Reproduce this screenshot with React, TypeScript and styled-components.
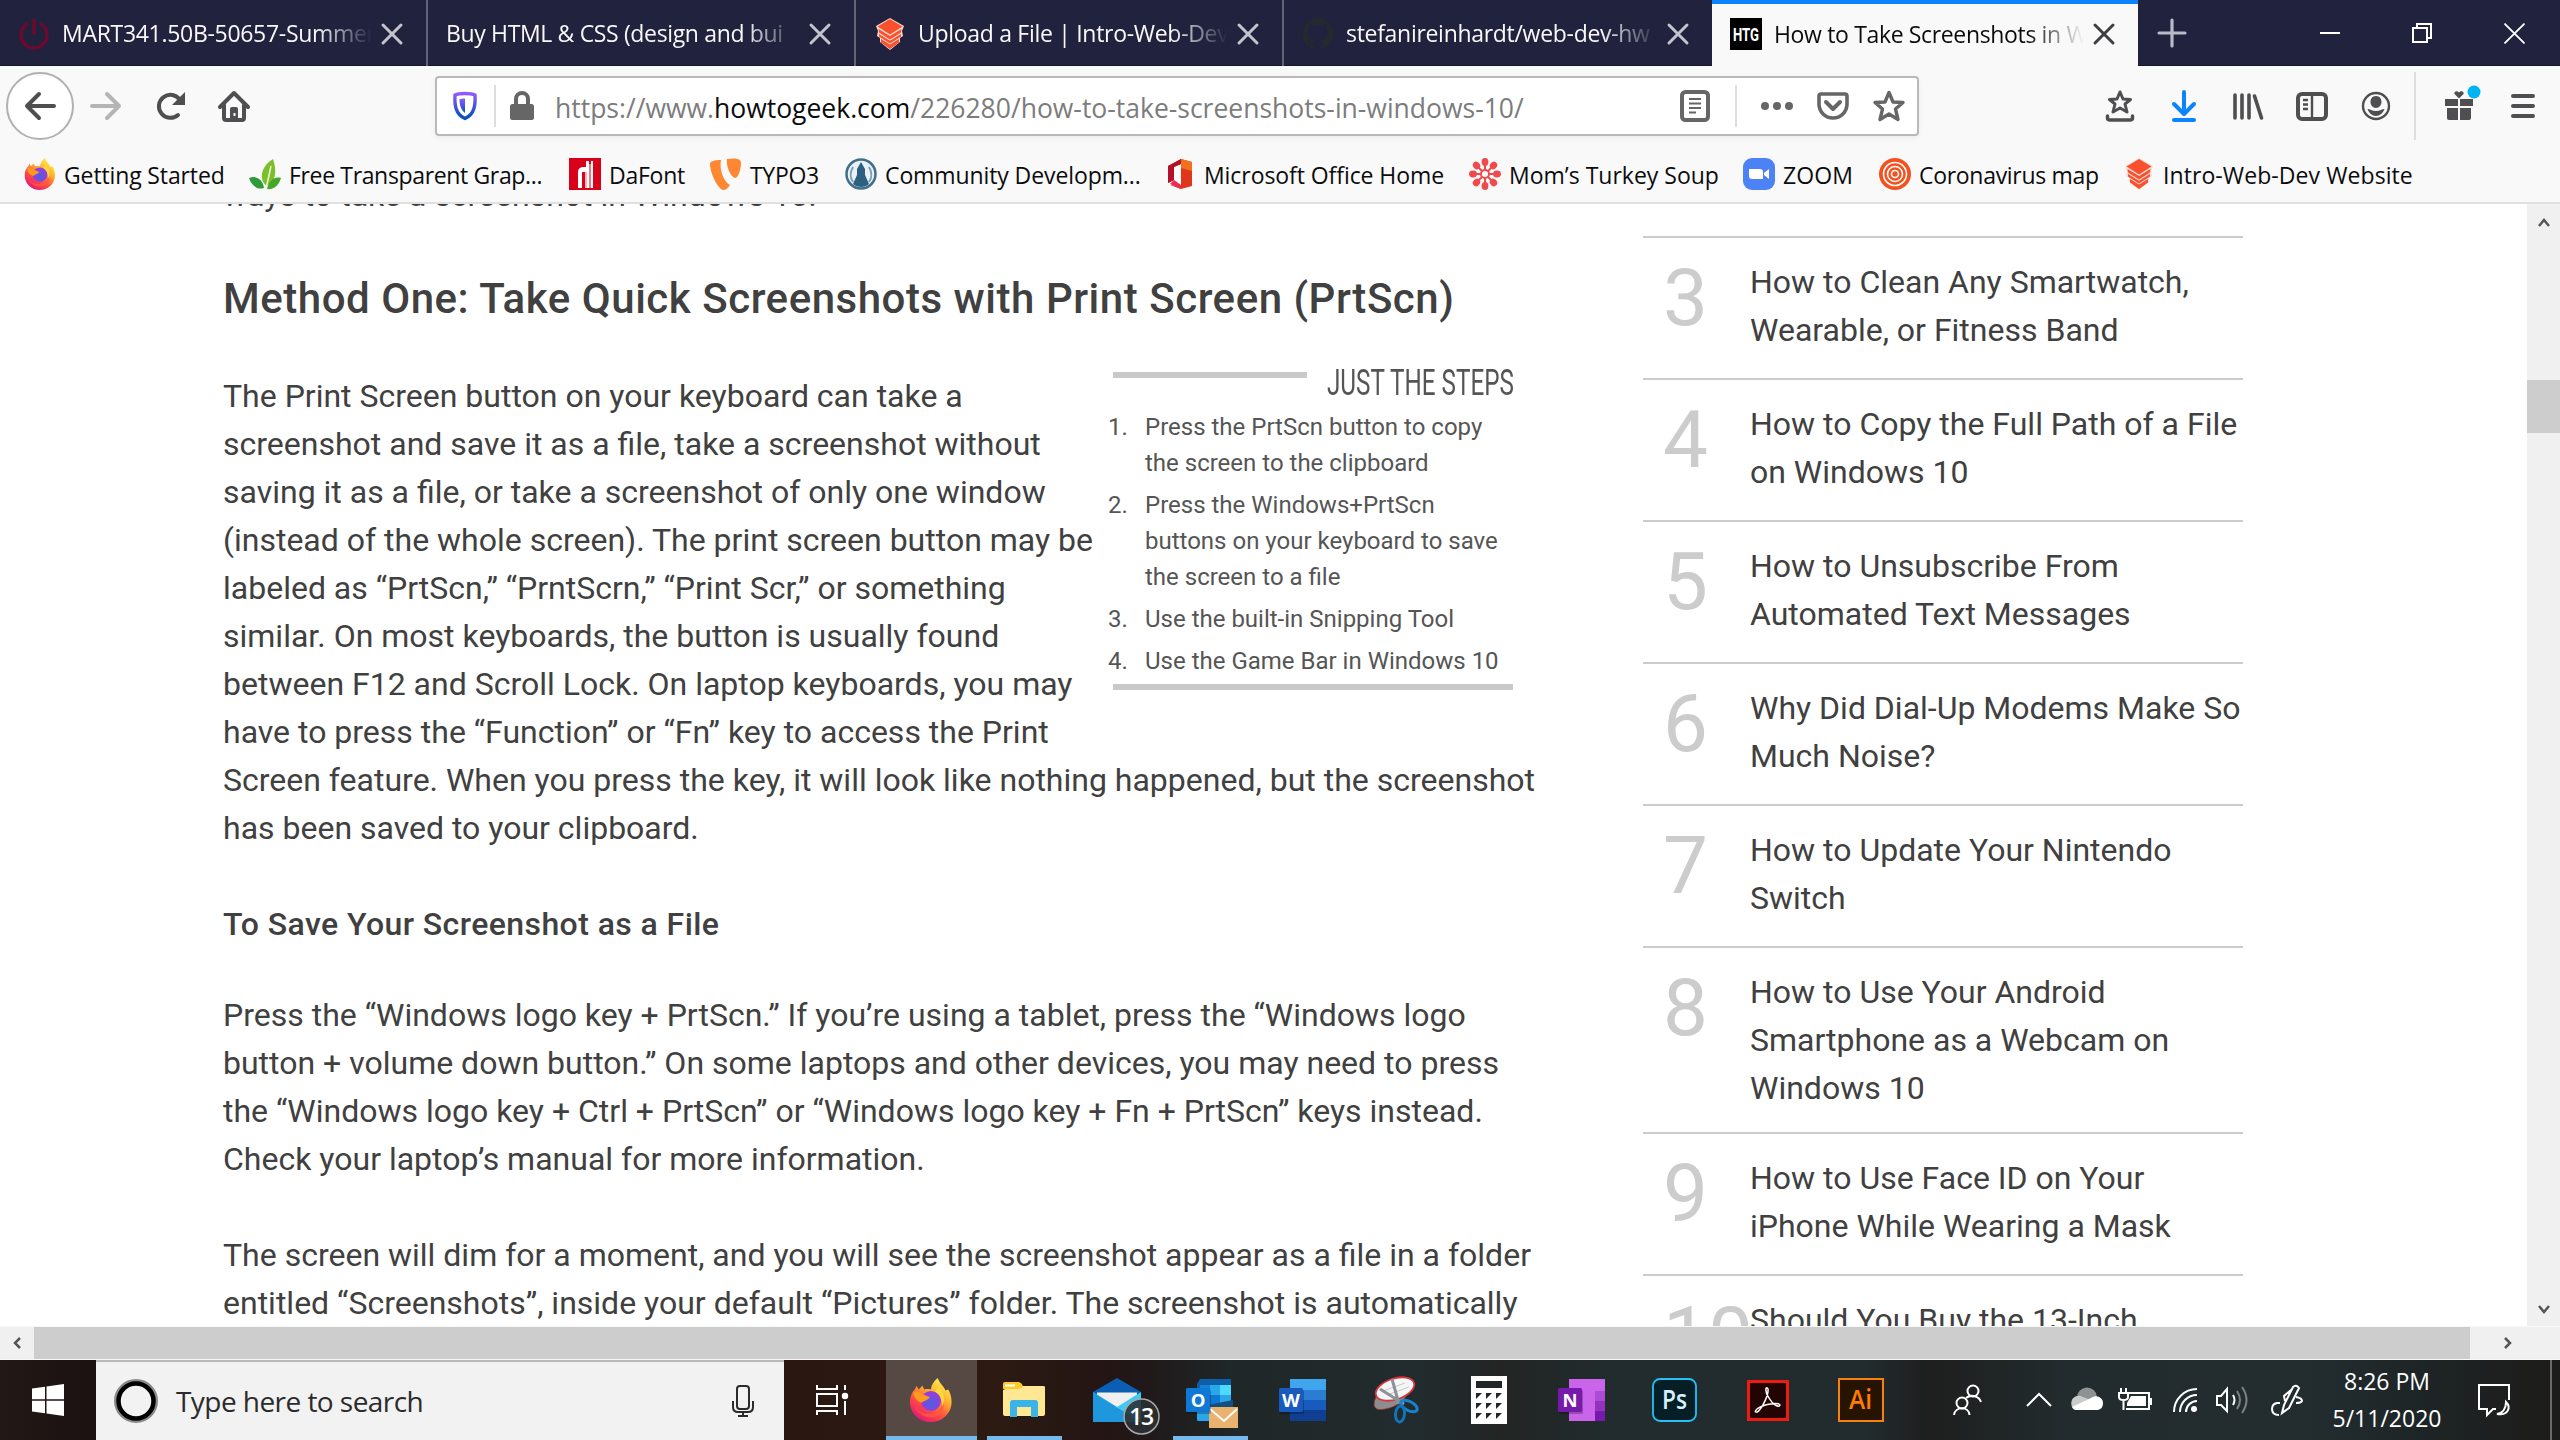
import React from "react";
import styled, { createGlobalStyle } from "styled-components";

const UI = `"Open Sans", "Noto Sans", sans-serif`;

const Global = createGlobalStyle`
  * { box-sizing: border-box; }
  body { margin: 0; background: #fff; overflow: hidden; }
  svg { display: block; flex: none; overflow: visible; }
`;

const Screen = styled.div`
  width: 2560px;
  height: 1440px;
  display: flex;
  flex-direction: column;
  overflow: hidden;
  font-family: ${UI};
  white-space: nowrap;
`;

/* ---------- tab strip ---------- */

const TabStrip = styled.div`
  height: 66px;
  display: flex;
  background: #20223e;
  box-shadow: inset 0 -1px 0 #15172b;
`;

const Tab = styled.div<{ $active?: boolean; $line?: boolean }>`
  width: ${(p) => (p.$active ? 426 : 428)}px;
  height: 66px;
  padding: 0 18px;
  display: flex;
  align-items: center;
  background: ${(p) => (p.$active ? "#f9f9fa" : "transparent")};
  color: ${(p) => (p.$active ? "#0c0c0d" : "#f9f9fa")};
  border-top: ${(p) => (p.$active ? "4px solid #0a84ff" : "0")};
  border-right: ${(p) => (p.$line ? "2px solid #63647a" : "0 solid")};
  svg { margin-top: ${(p) => (p.$active ? -2 : 2)}px; }
`;

const TabTitle = styled.div<{ $icon?: boolean; $active?: boolean; $ls: number }>`
  flex: 1;
  overflow: hidden;
  margin-left: ${(p) => (p.$icon ? 12 : 0)}px;
  margin-top: ${(p) => (p.$active ? -3 : 0)}px;
  font-size: 23px;
  line-height: 34px;
  letter-spacing: ${(p) => p.$ls}px;
  mask-image: linear-gradient(to left, transparent 0, #000 56px);
`;

const TabClose = styled.div`
  width: 32px;
  display: flex;
  justify-content: center;
  margin-left: 4px;
`;

const NewTab = styled.div`
  width: 68px;
  display: flex;
  align-items: center;
  justify-content: center;
`;

const WindowButtons = styled.div`
  margin-left: auto;
  display: flex;
  align-items: center;
`;

const WindowButton = styled.div`
  width: 92px;
  display: flex;
  justify-content: center;
`;

/* ---------- navigation ---------- */

const NavBar = styled.div`
  height: 80px;
  display: flex;
  align-items: center;
  background: #f9f9fa;
`;

const NavLeft = styled.div`
  width: 435px;
  display: flex;
  align-items: center;
  padding-left: 6px;
`;

const BackButton = styled.div`
  width: 68px;
  height: 68px;
  border-radius: 50%;
  border: 2px solid #b1b1b3;
  background: #fff;
  display: flex;
  align-items: center;
  justify-content: center;
`;

const NavButton = styled.div<{ $w?: number }>`
  width: ${(p) => p.$w ?? 64}px;
  display: flex;
  justify-content: center;
`;

const UrlBar = styled.div`
  width: 1484px;
  height: 60px;
  border: 2px solid #b9b9bb;
  border-radius: 4px;
  background: #fff;
  display: flex;
  align-items: center;
  padding-left: 12px;
  box-shadow: 0 2px 6px rgba(0, 0, 0, 0.06);
`;

const Divider = styled.div<{ $h: number }>`
  width: 2px;
  height: ${(p) => p.$h}px;
  background: #dededf;
`;

const Url = styled.div`
  flex: 1;
  margin-left: 20px;
  font-size: 26.5px;
  line-height: 40px;
  padding-top: 4px;
  color: #7c7c7d;
  b { font-weight: 400; color: #0c0c0d; }
`;

const NavRight = styled.div`
  flex: 1;
  display: flex;
  align-items: center;
  justify-content: flex-end;
  padding-right: 9px;
`;

const Bookmarks = styled.div`
  height: 58px;
  display: flex;
  padding-top: 12px;
  padding-left: 24px;
  background: #f9f9fa;
  border-bottom: 2px solid #e0e0e1;
`;

const Bookmark = styled.div<{ $w: number; $ls: number }>`
  width: ${(p) => p.$w}px;
  height: 32px;
  display: flex;
  align-items: center;
  gap: 8px;
  font-size: 23px;
  line-height: 32px;
  letter-spacing: ${(p) => p.$ls}px;
  color: #0c0c0d;
  span { padding-top: 2px; }
`;

/* ---------- page ---------- */

const Viewport = styled.div`
  height: 1122px;
  display: flex;
  overflow: hidden;
  background: #fff;
`;

const Page = styled.div`
  flex: 1;
  display: flex;
  overflow: hidden;
  font-family: Roboto, sans-serif;
  color: #404040;
  font-size: 32px;
  line-height: 48px;
`;

const Article = styled.div`
  flex: none;
  width: 1643px;
  padding-left: 223px;
  margin-top: -33px;
`;

const Paragraph = styled.div<{ $mt?: number }>`
  margin-top: ${(p) => p.$mt ?? 0}px;
`;

const H2 = styled.h2`
  margin: 48px 0 0;
  padding-bottom: 8px;
  font-size: 42px;
  line-height: 64px;
  font-weight: 500;
  letter-spacing: 0.53px;
`;

const H4 = styled.h4`
  margin: 48px 0 0;
  font-size: 32px;
  line-height: 48px;
  font-weight: 500;
  letter-spacing: 0.42px;
`;

const Steps = styled.aside`
  float: right;
  width: 400px;
  margin-right: 130px;
  height: 318px;
  border-bottom: 6px solid #c9c9c9;
  color: #555;
`;

const StepsHead = styled.div`
  display: flex;
  justify-content: space-between;
  height: 37px;
`;

const StepsRule = styled.div`
  width: 194px;
  height: 6px;
  background: #c9c9c9;
`;

const StepsTitle = styled.div`
  width: 186px;
  margin-top: -13px;
  font-size: 37px;
  line-height: 48px;
  color: #555;
  transform: scaleX(0.655);
  transform-origin: 0 0;
`;

const StepList = styled.ol`
  list-style: none;
  margin: 0 0 0 -5px;
  padding: 0;
  font-size: 24px;
  line-height: 36px;
`;

const Step = styled.li`
  display: flex;
  margin-bottom: 6px;
  span { width: 37px; }
`;

const Sidebar = styled.div`
  flex: none;
  width: 600px;
  margin-top: 32px;
`;

const SideItem = styled.div<{ $tall?: boolean }>`
  display: flex;
  border-top: 2px solid #ccc;
  padding: 20px 0 ${(p) => (p.$tall ? 20 : 24)}px 20px;
`;

const SideNumber = styled.div`
  width: 87px;
  height: 0;
  font-size: 80px;
  line-height: 80px;
  color: #ccc;
`;

const VScroll = styled.div`
  width: 33px;
  background: #f0f0f0;
  display: flex;
  flex-direction: column;
  align-items: center;
  padding: 14px 0 12px;
`;

const VThumb = styled.div`
  width: 33px;
  height: 53px;
  margin-top: 152px;
  margin-bottom: auto;
  background: #cdcdcd;
`;

const HScroll = styled.div`
  height: 34px;
  display: flex;
  background: #f0f0f0;
  border-top: 1px solid #f7f7f7;
  border-bottom: 1px solid #f7f7f7;
`;

const HButton = styled.div<{ $w: number; $pad: number }>`
  width: ${(p) => p.$w}px;
  display: flex;
  align-items: center;
  justify-content: flex-end;
  padding-right: ${(p) => p.$pad}px;
`;

const HThumb = styled.div`
  width: 2436px;
  background: #cdcdcd;
`;

/* ---------- taskbar ---------- */

const Taskbar = styled.div`
  height: 80px;
  display: flex;
  color: #fff;
  background: linear-gradient(90deg, #221917 0, #1a1110 96px, #2a1711 800px, #2c1a13 1000px, #231514 1110px, #20191a 1150px, #1f2728 1230px, #222b2d 1420px, #222524 1500px, #222c2e 1620px, #222c2e 1860px, #1e1f1e 1930px, #222b2d 2060px, #232d2f 2300px, #1e2628 2400px, #1d1c1a 2550px);
`;

const StartButton = styled.div`
  width: 96px;
  display: flex;
  align-items: center;
  justify-content: center;
`;

const SearchBox = styled.div`
  width: 688px;
  display: flex;
  align-items: center;
  background: #f2f2f2;
  border-top: 2px solid #b9b8b8;
  padding: 0 29px 0 18px;
`;

const SearchText = styled.div`
  flex: 1;
  margin-left: 18px;
  font-size: 28px;
  line-height: 40px;
  letter-spacing: -0.55px;
  color: #2b2b2b;
`;

const TaskView = styled.div`
  width: 101px;
  display: flex;
  align-items: center;
  padding-left: 32px;
`;

const TaskApp = styled.div<{ $state?: "active" | "open" }>`
  width: 93px;
  display: flex;
  align-items: center;
  justify-content: center;
  border: solid transparent;
  border-width: 0 ${(p) => (p.$state === "active" ? 1 : 9)}px 0 ${(p) => (p.$state === "active" ? 1 : 9)}px;
  background: ${(p) => (p.$state === "active" ? "#564943" : "transparent")};
  background-clip: padding-box;
  position: relative;
  svg { margin-right: 2px; }
  &::after {
    content: "";
    position: absolute;
    left: 0;
    right: 0;
    bottom: 0;
    height: ${(p) => (p.$state ? 4 : 0)}px;
    background: #76b9ed;
  }
`;

const Tray = styled.div`
  flex: 1;
  display: flex;
  align-items: center;
`;

const TrayItem = styled.div<{ $w: number }>`
  width: ${(p) => p.$w}px;
  display: flex;
  justify-content: center;
`;

const Clock = styled.div`
  width: 110px;
  text-align: center;
  font-size: 23px;
  line-height: 37px;
`;

const DesktopEdge = styled.div`
  width: 10px;
  margin-left: auto;
  height: 80px;
  border-left: 2px solid #6a6a6a;
`;

/* ---------- drawings ---------- */

type SvgProps = { w?: number; h?: number; vb?: string; children: React.ReactNode };
const Svg = ({ w = 32, h = w, vb = "0 0 32 32", children }: SvgProps) => (
  <svg width={w} height={h} viewBox={vb} fill="none">{children}</svg>
);

const Cross = ({ c, s = 20, sw = 3 }: { c: string; s?: number; sw?: number }) => (
  <Svg w={s} vb="0 0 20 20"><path d="M1 1 19 19M19 1 1 19" stroke={c} strokeWidth={sw} strokeLinecap="round" /></Svg>
);

const Stack = () => (
  <Svg>
    <path d="M16 0 30 8 28 13 29 18 26 20V24L16 32 6 24V20L3 18 4 13 2 8Z" fill="#f9d9d2" />
    <path d="M16 1 28.500 8.500 16 16.500 3.500 8.500Z" fill="#f9502e" />
    <path d="M4.500 11 16 18 27.500 11 27 14.500 16 21.500 5 14.500ZM5 16 16 22.700 27 16V18.500L16 25.500 5 18.500ZM7 21 16 26.500 25 21V24.500L16 31 7 24.500Z" fill="#f9502e" />
  </Svg>
);

const Firefox = ({ s = 30, id }: { s?: number; id: string }) => (
  <Svg w={s} vb="0 0 44 46">
    <defs>
      <linearGradient id={id + "a"} x1="0.85" y1="0.05" x2="0.25" y2="1">
        <stop offset="0" stopColor="#fff44f" /><stop offset="0.35" stopColor="#ffb02e" />
        <stop offset="0.65" stopColor="#ff4f40" /><stop offset="1" stopColor="#e3127a" />
      </linearGradient>
      <radialGradient id={id + "b"} cx="0.5" cy="0.6" r="0.6">
        <stop offset="0" stopColor="#4f5ee0" /><stop offset="1" stopColor="#a038e0" />
      </radialGradient>
    </defs>
    <path d="M29 0C31 6 36 9 37 13L40 12C44 19 45 28 41 35 37 42 30 46 22 46 9 46 0 36 0 25 0 19 2 15 5 12L7 8 9 12 13 8 15 12C18 11 21 12 22 12 22 8 25 3 29 0Z" fill={`url(#${id}a)`} />
    <circle cx="22" cy="24" r="10.500" fill={`url(#${id}b)`} />
    <path d="M4 24C5 34 13 39 24 37 32 35 35 29 33 21 38 29 35 39 24 41 12 42 4 33 4 24Z" fill="#ff5a3a" opacity="0.8" />
    <path d="M4 14C10 14 13 17 21 20 17 24 14 24 12 26 6 23 3 19 4 14Z" fill="#ff9a1f" />
    <path d="M30 10C36 15 37 23 34 30 34 22 31 17 26 14Z" fill="#ffd83a" />
  </Svg>
);

const Leaf = () => (
  <Svg>
    <path d="M24 1C28 12 27 24 18 28 9 22 12 8 24 1Z" fill="#7cbf2a" />
    <path d="M22 8 17 31" stroke="#eef7dd" strokeWidth="1.500" />
    <path d="M0 20C8 17 14 22 15 30 8 32 3 28 0 20Z" fill="#2e9b3a" />
    <path d="M32 20C25 18 20 23 18 31 25 32 30 27 32 20Z" fill="#46a828" />
  </Svg>
);

const DaFont = () => (
  <Svg>
    <path d="M0 0H32V32H0Z" fill="#d9001b" />
    <path d="M9 30V14Q9 9 15 9H17V3H20V30H16V14H13V30ZM22 3H24V30H22Z" fill="#fff" />
    <path d="M17 14V30M21 6V30" stroke="#f2a0a8" strokeWidth="1.500" />
  </Svg>
);

const Typo3 = () => (
  <Svg>
    <path d="M11 2C9 12 14 24 20 27 18 30 16 32 13 32 7 30 0 14 0 6 0 3 5 2 11 2ZM17 1C24 0 31 0 31 5 31 12 28 20 25 20 20 18 16 8 17 1Z" fill="#ff8732" />
  </Svg>
);

const Community = () => (
  <Svg>
    <circle cx="16" cy="16" r="14.500" stroke="#3f6f8c" strokeWidth="2.500" fill="#eaf2f6" />
    <path d="M16 4 20 11V17L24 26C20 30 12 30 8 26L12 17V11Z" fill="#2c5f80" />
    <path d="M8 9C5 14 5 20 8 24M24 9C27 14 27 20 24 24" stroke="#7ba0b5" strokeWidth="2" />
  </Svg>
);

const Office = () => (
  <Svg>
    <path d="M17 1 28 4V28L17 31 6 27 17 28V6L10 9V22L4 25V8Z" fill="#e0371c" />
    <path d="M17 1V6L10 9V22L4 25V8Z" fill="#b3102a" />
    <path d="M6 26 10 22 17 27V31Z" fill="#ee2a55" />
    <path d="M17 1 28 4V13L17 10Z" fill="#f2711c" />
  </Svg>
);

const Flower = () => (
  <Svg>
    {[0, 45, 90, 135, 180, 225, 270, 315].map((a) => (
      <g key={a} transform={`rotate(${a} 16 16)`}>
        <ellipse cx="16" cy="4" rx="3.400" ry="4" fill="#ef4a4c" />
        <path d="M16 7V12" stroke="#ef4a4c" strokeWidth="2" />
      </g>
    ))}
    <circle cx="16" cy="16" r="4" stroke="#ef4a4c" strokeWidth="2" fill="#fff" />
  </Svg>
);

const ZoomLogo = () => (
  <Svg>
    <rect width="32" height="32" rx="9" fill="#4d82f7" />
    <path d="M6 11H17Q20 11 20 14V21H9Q6 21 6 18ZM21 15 26 11V21L21 17Z" fill="#fff" />
  </Svg>
);

const Rings = () => (
  <Svg>
    <circle cx="16" cy="16" r="16" fill="#f4511e" />
    <circle cx="16" cy="16" r="11.500" stroke="#fff" strokeWidth="1.600" />
    <circle cx="16" cy="16" r="7.500" stroke="#fff" strokeWidth="1.600" />
    <circle cx="16" cy="16" r="3.500" stroke="#fff" strokeWidth="1.600" />
  </Svg>
);

const GitHub = () => (
  <Svg>
    <path d="M16 0A16 16 0 0 0 11 31C12 31 12 30.500 12 30V27C7.500 28 6.500 25 6.500 25 5.800 23.200 4.800 22.700 4.800 22.700 3.300 21.700 5 21.700 5 21.700 6.600 21.800 7.400 23.300 7.400 23.300 8.800 25.800 11.200 25 12 24.700 12.200 23.600 12.600 22.900 13.100 22.500 9.500 22.100 5.800 20.700 5.800 14.600 5.800 12.900 6.400 11.500 7.400 10.300 7.300 9.900 6.700 8.200 7.600 6 7.600 6 9 5.600 12 7.700A15.300 15.300 0 0 1 20 7.700C23 5.600 24.400 6 24.400 6 25.300 8.200 24.700 9.900 24.600 10.300 25.600 11.500 26.200 12.900 26.200 14.600 26.200 20.700 22.500 22.100 18.900 22.500 19.500 23 20 24 20 25.400V30C20 30.500 20 31 21 31A16 16 0 0 0 16 0Z" fill="#24292e" />
  </Svg>
);

const G = "#4f4f51";

const people = (
  <Svg w={30} h={32} vb="0 0 30 32">
    <g stroke="#fff" strokeWidth="2">
      <circle cx="20" cy="7" r="5.500" /><circle cx="9" cy="19" r="5.500" />
      <path d="M1 31C2 22 16 22 16.500 31M13 14C18 10 26 12 28 18" />
    </g>
  </Svg>
);

const OfficeTile = ({ letter, tile, children }: { letter: string; tile: string; children: React.ReactNode }) => (
  <Svg w={48} h={42} vb="0 0 48 42">
    {children}
    <rect x="1" y="11" width="24" height="24" rx="1.500" fill="#000" opacity="0.25" />
    <rect x="0" y="9" width="24" height="24" rx="1.500" fill={tile} />
    <text x="12" y="27.500" fontSize="18.500" fontWeight="700" fontFamily={UI} fill="#fff" textAnchor="middle">{letter}</text>
  </Svg>
);

/* ---------- data ---------- */

const tabs = [
  { title: "MART341.50B-50657-Summer", ls: -0.3, icon: <Svg><path d="M10 5.500A13 13 0 1 0 22 5.500M16 1V17" stroke="#6b0a2c" strokeWidth="3.500" /></Svg> },
  { title: "Buy HTML & CSS (design and bui", ls: -0.35, icon: null },
  { title: "Upload a File | Intro-Web-Dev", ls: -0.3, icon: <Stack /> },
  { title: "stefanireinhardt/web-dev-hw", ls: -0.3, icon: <GitHub /> },
  {
    title: "How to Take Screenshots in W", ls: -0.35,
    icon: <Svg><rect width="32" height="32" fill="#000" /><text x="16" y="23" fontSize="19" fontWeight="700" fontFamily="Liberation Sans Narrow, Roboto, sans-serif" fill="#fff" textAnchor="middle" textLength="26" lengthAdjust="spacingAndGlyphs">HTG</text></Svg>,
  },
];

const bookmarks: [string, number, number, React.ReactNode][] = [
  ["Getting Started", 225, -0.13, <Firefox id="fb" s={32} />],
  ["Free Transparent Grap...", 320, -0.35, <Leaf />],
  ["DaFont", 141, -0.25, <DaFont />],
  ["TYPO3", 135, -0.3, <Typo3 />],
  ["Community Developm...", 319, -0.1, <Community />],
  ["Microsoft Office Home", 305, -0.07, <Office />],
  ["Mom’s Turkey Soup", 274, 0, <Flower />],
  ["ZOOM", 136, 0.1, <ZoomLogo />],
  ["Coronavirus map", 244, -0.3, <Rings />],
  ["Intro-Web-Dev Website", 300, 0.08, <Stack />],
];

const steps = [
  ["Press the PrtScn button to copy", "the screen to the clipboard"],
  ["Press the Windows+PrtScn", "buttons on your keyboard to save", "the screen to a file"],
  ["Use the built-in Snipping Tool"],
  ["Use the Game Bar in Windows 10"],
];

const side = [
  ["How to Clean Any Smartwatch,", "Wearable, or Fitness Band"],
  ["How to Copy the Full Path of a File", "on Windows 10"],
  ["How to Unsubscribe From", "Automated Text Messages"],
  ["Why Did Dial-Up Modems Make So", "Much Noise?"],
  ["How to Update Your Nintendo", "Switch"],
  ["How to Use Your Android", "Smartphone as a Webcam on", "Windows 10"],
  ["How to Use Face ID on Your", "iPhone While Wearing a Mask"],
  ["Should You Buy the 13-Inch"],
];

const intro = [
  "The Print Screen button on your keyboard can take a",
  "screenshot and save it as a file, take a screenshot without",
  "saving it as a file, or take a screenshot of only one window",
  "(instead of the whole screen). The print screen button may be",
  "labeled as “PrtScn,” “PrntScrn,” “Print Scr,” or something",
  "similar. On most keyboards, the button is usually found",
  "between F12 and Scroll Lock. On laptop keyboards, you may",
  "have to press the “Function” or “Fn” key to access the Print",
  "Screen feature. When you press the key, it will look like nothing happened, but the screenshot",
  "has been saved to your clipboard.",
];

const saving = [
  "Press the “Windows logo key + PrtScn.” If you’re using a tablet, press the “Windows logo",
  "button + volume down button.” On some laptops and other devices, you may need to press",
  "the “Windows logo key + Ctrl + PrtScn” or “Windows logo key + Fn + PrtScn” keys instead.",
  "Check your laptop’s manual for more information.",
];

const dimming = [
  "The screen will dim for a moment, and you will see the screenshot appear as a file in a folder",
  "entitled “Screenshots”, inside your default “Pictures” folder. The screenshot is automatically",
];

const Lines = ({ of }: { of: string[] }) => (
  <>{of.map((l) => <React.Fragment key={l}>{l}<br /></React.Fragment>)}</>
);

/* ---------- sections ---------- */

const Browser = () => (
  <>
    <TabStrip>
      {tabs.map((t, i) => (
        <Tab key={t.title} $active={i === 4} $line={i < 3}>
          {t.icon}
          <TabTitle $icon={!!t.icon} $active={i === 4} $ls={t.ls}>{t.title}</TabTitle>
          <TabClose><Cross c={i === 4 ? "#3f3f41" : "#c4c4cc"} /></TabClose>
        </Tab>
      ))}
      <NewTab><Svg w={28} vb="0 0 28 28"><path d="M14 1V27M1 14H27" stroke="#b9bac6" strokeWidth="3.200" strokeLinecap="round" /></Svg></NewTab>
      <WindowButtons>
        <WindowButton><Svg w={20} vb="0 0 20 20"><path d="M0 10H20" stroke="#fff" strokeWidth="2" /></Svg></WindowButton>
        <WindowButton><Svg w={20} vb="0 0 20 20"><path d="M1 5H15V19H1ZM5 5V1H19V15H15" stroke="#fff" strokeWidth="2" /></Svg></WindowButton>
        <WindowButton><Cross c="#fff" sw={1.8} s={21} /></WindowButton>
      </WindowButtons>
    </TabStrip>

    <NavBar>
      <NavLeft>
        <BackButton><Svg><path d="M30 16H3M15 4 3 16 15 28" stroke={G} strokeWidth="4" strokeLinecap="round" strokeLinejoin="round" /></Svg></BackButton>
        <NavButton><Svg><path d="M2 16H29M17 4 29 16 17 28" stroke="#b5b5b6" strokeWidth="4" strokeLinecap="round" strokeLinejoin="round" /></Svg></NavButton>
        <NavButton><Svg>
          <path d="M24 25A11.500 11.500 0 1 1 26 10" stroke={G} strokeWidth="4" strokeLinecap="round" />
          <path d="M31 2V15H18Z" fill={G} />
        </Svg></NavButton>
        <NavButton><Svg>
          <path d="M2 17 16 3 30 17M6 15V28Q6 30 8 30H24Q26 30 26 28V15" stroke={G} strokeWidth="4" strokeLinecap="round" strokeLinejoin="round" />
          <path d="M12 28V19Q12 17 14 17H18Q20 17 20 19V28" fill={G} />
          <path d="M16.500 23V26" stroke="#f9f9fa" strokeWidth="2" />
        </Svg></NavButton>
      </NavLeft>
      <UrlBar>
        <NavButton $w={32}><Svg>
          <defs><linearGradient id="sh" x1="0" y1="0" x2="0" y2="1"><stop offset="0" stopColor="#9059ff" /><stop offset="1" stopColor="#0250bb" /></linearGradient></defs>
          <path d="M16 3.500C20 3.500 24 4 26 5 26.500 14 26 24 16 28.500 6 24 5.500 14 6 5 8 4 12 3.500 16 3.500Z" stroke="url(#sh)" strokeWidth="3.400" />
          <path d="M16 8.500C14 8.500 12 9 10.500 9.300 10.500 15 12 20 16 23Z" fill="url(#sh)" />
        </Svg></NavButton>
        <NavButton $w={28}><Divider $h={42} /></NavButton>
        <NavButton $w={26}><Svg>
          <path d="M10 15V9A6 6 0 0 1 22 9V15" stroke="#666" strokeWidth="4" />
          <rect x="4" y="14" width="24" height="16" rx="2.500" fill="#666" />
        </Svg></NavButton>
        <Url>https://www.<b>howtogeek.com</b>/226280/how-to-take-screenshots-in-windows-10/</Url>
        <NavButton $w={56}><Svg>
          <rect x="3" y="2" width="26" height="28" rx="3.500" stroke="#666" strokeWidth="4" />
          <path d="M10 9H22M10 13.500H22M10 18H22M10 22.500H17" stroke="#666" strokeWidth="2" />
        </Svg></NavButton>
        <NavButton $w={26}><Divider $h={42} /></NavButton>
        <NavButton $w={56}><Svg><g fill="#666"><circle cx="4" cy="16" r="4" /><circle cx="16" cy="16" r="4" /><circle cx="28" cy="16" r="4" /></g></Svg></NavButton>
        <NavButton $w={56}><Svg>
          <path d="M4 4H28Q30 4 30 6V14A14 14 0 0 1 2 14V6Q2 4 4 4Z" stroke="#666" strokeWidth="3.600" />
          <path d="M9 12 16 19 23 12" stroke="#666" strokeWidth="4" strokeLinecap="round" strokeLinejoin="round" />
        </Svg></NavButton>
        <NavButton $w={56}><Svg><path d="M16 2.500 20 12 30 12.500 22.500 19 25 29.500 16 24 7 29.500 9.500 19 2 12.500 12 12Z" stroke="#666" strokeWidth="3.400" strokeLinejoin="round" /></Svg></NavButton>
      </UrlBar>
      <NavRight>
        <NavButton><Svg>
          <path d="M16 2 19 9 26.500 9.500 21 14 23 22 16 18 9 22 11 14 5.500 9.500 13 9Z" stroke={G} strokeWidth="3" strokeLinejoin="round" />
          <path d="M3.500 26V28Q3.500 30 6 30H26Q28.500 30 28.500 28V26" stroke={G} strokeWidth="3.500" strokeLinecap="round" />
        </Svg></NavButton>
        <NavButton><Svg><path d="M16 2V22M6 14 16 24 26 14M6 30H26" stroke="#0a84ff" strokeWidth="4" strokeLinecap="round" strokeLinejoin="round" /></Svg></NavButton>
        <NavButton><Svg><path d="M3 5V28M10 5V28M17 5V28" stroke={G} strokeWidth="3.600" strokeLinecap="round" /><path d="M22.500 6 29.500 28" stroke={G} strokeWidth="3.600" strokeLinecap="round" /></Svg></NavButton>
        <NavButton><Svg>
          <rect x="2" y="4" width="28" height="25" rx="4" stroke={G} strokeWidth="4" />
          <path d="M16 4V28M7 10H12M7 14.500H12M7 19H12" stroke={G} strokeWidth="2.400" />
        </Svg></NavButton>
        <NavButton><Svg>
          <circle cx="16" cy="16" r="13" stroke={G} strokeWidth="2.400" />
          <path d="M16 6C20 6 21.500 9 21.500 12 21.500 15 19 18 16 18 13 18 10.500 15 10.500 12 10.500 9 12 6 16 6ZM7.500 19C10 19 12 21 16 21 20 21 22 19 24.500 19 23 23 20 26 16 26 12 26 9 23 7.500 19Z" fill={G} />
        </Svg></NavButton>
        <NavButton $w={14}><Divider $h={68} /></NavButton>
        <NavButton $w={73}><Svg>
          <path d="M2 9H15V16H2ZM17 9H30V16H17ZM4 18H15V30H6Q4 30 4 28ZM17 18H28V28Q28 30 26 30H17Z" fill={G} />
          <path d="M16 8.500 11.500 4C10.500 1.500 14 0 16 2.500 18 0 21.500 1.500 20.500 4Z" fill={G} />
          <circle cx="31" cy="2" r="6.500" fill="#00b3f4" />
        </Svg></NavButton>
        <NavButton $w={56}><Svg><path d="M6 6H26M6 16H26M6 26H26" stroke={G} strokeWidth="4" strokeLinecap="round" /></Svg></NavButton>
      </NavRight>
    </NavBar>

    <Bookmarks>
      {bookmarks.map(([label, w, ls, icon]) => (
        <Bookmark key={label} $w={w} $ls={ls}>{icon}<span>{label}</span></Bookmark>
      ))}
    </Bookmarks>
  </>
);

const Content = () => (
  <Viewport>
    <Page>
      <Article>
        <Paragraph>ways to take a screenshot in Windows 10:</Paragraph>
        <H2>Method One: Take Quick Screenshots with Print Screen (PrtScn)</H2>
        <Paragraph $mt={33}>
          <Steps>
            <StepsHead><StepsRule /><StepsTitle>JUST THE STEPS</StepsTitle></StepsHead>
            <StepList>
              {steps.map((s, i) => (
                <Step key={s[0]}><span>{i + 1}.</span><div><Lines of={s} /></div></Step>
              ))}
            </StepList>
          </Steps>
          <Lines of={intro} />
        </Paragraph>
        <H4>To Save Your Screenshot as a File</H4>
        <Paragraph $mt={43}><Lines of={saving} /></Paragraph>
        <Paragraph $mt={48}><Lines of={dimming} /></Paragraph>
      </Article>
      <Sidebar>
        {side.map((s, i) => (
          <SideItem key={s[0]} $tall={s.length > 2}><SideNumber>{i + 3}</SideNumber><div><Lines of={s} /></div></SideItem>
        ))}
      </Sidebar>
    </Page>
    <VScroll>
      <Svg w={12} h={10} vb="0 0 12 10"><path d="M1 8 6 2 11 8" stroke="#555" strokeWidth="2.500" /></Svg>
      <VThumb />
      <Svg w={12} h={10} vb="0 0 12 10"><path d="M1 2 6 8 11 2" stroke="#555" strokeWidth="2.500" /></Svg>
    </VScroll>
  </Viewport>
);

const calcDots = [0, 1, 2].flatMap((r) => [0, 1, 2].map((c) => [5 + c * 10, 17 + r * 10]));

const Dock = () => (
  <Taskbar>
    <StartButton><Svg><path d="M0 4.500 13 2.700V15.300H0ZM14.500 2.500 32 0V15.300H14.500ZM0 16.700H13V29.300L0 27.500ZM14.500 16.700H32V32L14.500 29.500Z" fill="#fff" /></Svg></StartButton>
    <SearchBox>
      <Svg w={44} vb="0 0 44 44"><circle cx="22" cy="22" r="20.500" stroke="#8a8a8a" strokeWidth="3" /><circle cx="22" cy="22" r="17.500" stroke="#000" strokeWidth="4.500" /></Svg>
      <SearchText>Type here to search</SearchText>
      <Svg w={24} h={32} vb="0 0 24 32"><rect x="6" y="1" width="12" height="23" rx="3" stroke="#2b2b2b" strokeWidth="2" /><path d="M2 16V22Q2 27 7 27H17Q22 27 22 22V16M12 27V31M7 31H17" stroke="#2b2b2b" strokeWidth="2" /></Svg>
    </SearchBox>
    <TaskView><Svg w={32} vb="0 0 32 32"><path d="M1 1V5H21V1M1 31V27H21V31M1 10H21V22H1ZM29 1V6M29 17V31" stroke="#fff" strokeWidth="2" /><circle cx="29" cy="12" r="3.200" fill="#fff" /></Svg></TaskView>
    <TaskApp $state="active"><Firefox id="ft" s={44} /></TaskApp>
    <TaskApp $state="open">
      <Svg w={42} h={36} vb="0 0 42 36"><path d="M0 8V32Q0 34 2 34H40Q42 34 42 32V5Q42 4 40 4H10Z" fill="#ffe794" /><path d="M0 2Q0 0 2 0H16Q19 1 20 4 18 7 15 7H0Z" fill="#ffca28" /><path d="M2 3.500H12" stroke="#fff" strokeWidth="2" /><path d="M7 35V21Q7 18 10 18H32Q35 18 35 21V35H28V25H14V35Z" fill="#3ab4e6" /></Svg>
    </TaskApp>
    <TaskApp>
      <Svg w={48} h={44} vb="0 0 48 44">
        <path d="M0 14 24 0 48 14V22H0Z" fill="#0a5fb4" /><path d="M4 14.500H44V30H4Z" fill="#f0f0f1" /><path d="M0 14 24 29 0 44Z" fill="#29a9ea" />
        <path d="M48 14 24 29V44H48Z" fill="#3ccbf6" /><path d="M0 44V15L48 44Z" fill="#1f97dc" />
        <circle cx="48.500" cy="38.500" r="17.500" fill="#2b3033" fillOpacity="0.88" stroke="#a5a7a8" strokeWidth="1.500" />
        <text x="48" y="46.500" fontSize="23" fontWeight="600" fontFamily={UI} fill="#fff" textAnchor="middle" letterSpacing="-1.500">13</text>
      </Svg>
    </TaskApp>
    <TaskApp $state="open">
      <OfficeTile letter="O" tile="#0f78d4">
        <path d="M14 0H45V42H11V5Z" fill="#0f5ea8" /><path d="M14 6H34V16H14Z" fill="#1480d8" /><path d="M34 6H45V16H34Z" fill="#50d9ff" /><path d="M24 6H34V16H24Z" fill="#28a8ea" />
        <path d="M24 16H34V27H24Z" fill="#0f78d4" /><path d="M34 16H45V27H34Z" fill="#28a8ea" /><path d="M11 28 47 21V30H11Z" fill="#14507f" /><path d="M11 30H26V42H13Q11 42 11 40Z" fill="#28a8ea" />
        <path d="M23 28H52V49H23Z" fill="#e9b36f" /><path d="M24 30 38 42 51 30" stroke="#fff" strokeWidth="2" />
      </OfficeTile>
    </TaskApp>
    <TaskApp>
      <OfficeTile letter="W" tile="#185abd">
        <path d="M11 0H47V11H11Z" fill="#41a5ee" /><path d="M11 11H47V21H11Z" fill="#2b7cd3" /><path d="M11 21H47V31H11Z" fill="#185abd" /><path d="M11 31H47V42H11Z" fill="#103f91" />
      </OfficeTile>
    </TaskApp>
    <TaskApp>
      <Svg w={46} h={46} vb="0 0 46 46">
        <path d="M4 18C-2 30 2 34 12 32 24 30 34 22 36 12Z" fill="#8d8d8f" stroke="#a33" strokeWidth="0.800" />
        <ellipse cx="22" cy="12" rx="20" ry="10.500" transform="rotate(-18 22 12)" fill="#f4f6f8" stroke="#d8343a" strokeWidth="1.800" />
        <path d="M10 14 32 6M14 18 36 10" stroke="#c5c8cc" strokeWidth="1" />
        <path d="M19 2 26 27M7 12 31 27" stroke="#8d9298" strokeWidth="3" />
        <ellipse cx="36" cy="29" rx="9" ry="4.500" transform="rotate(28 36 29)" stroke="#1683d0" strokeWidth="3" />
        <ellipse cx="27" cy="37" rx="4.500" ry="8" transform="rotate(5 27 37)" stroke="#1273b8" strokeWidth="3" />
      </Svg>
    </TaskApp>
    <TaskApp>
      <Svg w={36} h={48} vb="0 0 36 48"><path d="M0 0H36V48H0Z" fill="#fff" /><path d="M5 5H31V12H5Z" fill="#202627" />{calcDots.map(([x, y]) => <path key={`${x}-${y}`} d={`M${x} ${y}h6l-6 6z`} fill="#202627" />)}</Svg>
    </TaskApp>
    <TaskApp>
      <OfficeTile letter="N" tile="#7719aa">
        <path d="M11 0H47V42H11Z" fill="#ca64ea" /><path d="M37 12H47V22H37Z" fill="#ae4bd5" /><path d="M37 22H47V32H37Z" fill="#9332bf" /><path d="M37 32H47V42H37Z" fill="#7719aa" />
      </OfficeTile>
    </TaskApp>
    <TaskApp>
      <Svg w={45} h={44} vb="0 0 45 44"><rect x="1" y="1" width="43" height="42" rx="7" fill="#061e26" stroke="#26c0f7" strokeWidth="1.800" /><text x="22.500" y="30.500" fontSize="27" fontWeight="600" fontFamily={UI} fill="#d5f1fb" textAnchor="middle" textLength="25" lengthAdjust="spacingAndGlyphs">Ps</text></Svg>
    </TaskApp>
    <TaskApp>
      <Svg w={42} h={41} vb="0 0 42 41"><rect x="1.500" y="1.500" width="39" height="38" fill="#240402" stroke="#ee1c0e" strokeWidth="3" /><path d="M9 32C12 34 22 16 21 9 19 5 17 11 22 18 26 25 32 28 33 25 32 22 16 24 10 29 8 31 8 32 9 32Z" stroke="#fff" strokeWidth="1.500" /></Svg>
    </TaskApp>
    <TaskApp>
      <Svg w={46} h={44} vb="0 0 46 44"><rect x="1" y="1" width="44" height="42" fill="#261300" stroke="#f5820d" strokeWidth="2" /><text x="22.500" y="31" fontSize="27" fontWeight="600" fontFamily={UI} fill="#ff7c00" textAnchor="middle" textLength="23" lengthAdjust="spacingAndGlyphs">Ai</text></Svg>
    </TaskApp>
    <Tray>
      <TrayItem $w={119}>{people}</TrayItem>
      <TrayItem $w={24}><Svg w={26} h={14} vb="0 0 26 14"><path d="M1 13 13 1 25 13" stroke="#fff" strokeWidth="2" /></Svg></TrayItem>
      <TrayItem $w={72}><Svg w={32} h={22} vb="0 0 32 22">
        <path d="M6 9A10 10 0 0 1 26 8L16 14Z" fill="#8e9293" /><path d="M1 18C-2 10 5 4 12 8L22 12 5 20Z" fill="#c9cbcb" /><path d="M5 21C3 21 2 20 1 18L20 9C26 5 32 9 32 14 32 19 29 21 26 21Z" fill="#fff" />
      </Svg></TrayItem>
      <TrayItem $w={24}><Svg w={34} h={24} vb="0 0 34 24">
        <path d="M11 5H31V21H8M33 10V17" stroke="#fff" strokeWidth="2" /><path d="M13 8H28V18H9V15Z" fill="#fff" /><path d="M3 0V5M8 0V5M1 5H10V9Q10 12 5.500 12 1 12 1 9ZM5.500 12V22" stroke="#fff" strokeWidth="2" />
      </Svg></TrayItem>
      <TrayItem $w={76}><Svg w={24} h={24} vb="0 0 24 24"><path d="M1 24A23 23 0 0 1 24 1M7 24A17 17 0 0 1 24 7M13 24A11 11 0 0 1 24 13" stroke="#fff" strokeWidth="2" /><circle cx="21" cy="21" r="3" fill="#fff" /></Svg></TrayItem>
      <TrayItem $w={18}><Svg w={32} h={28} vb="0 0 32 28"><path d="M1 10H5L11 3V25L5 19H1Z" stroke="#fff" strokeWidth="2" /><path d="M17 9Q20 14 17 19" stroke="#fff" strokeWidth="2" /><path d="M21 5Q27 14 21 23M26 1Q35 14 26 27" stroke="#7d8283" strokeWidth="2" /></Svg></TrayItem>
      <TrayItem $w={91}><Svg w={32} vb="0 0 32 32"><path d="M11 29 13 21 22 3Q25 0 28 4L18 24ZM20 6 13 12 14 17M9 19H6Q1 20 1 25 1 31 8 31M25 13Q31 14 31 17 30 19 25 19" stroke="#fff" strokeWidth="2" /></Svg></TrayItem>
      <Clock>8:26 PM<br />5/11/2020</Clock>
      <TrayItem $w={104}><Svg w={32} vb="0 0 32 32"><path d="M18 25H15L9 31V25H1V1H31V16" stroke="#fff" strokeWidth="2" /><path d="M28 18C34 24 29 32 19 30 25 29 28 24 28 18Z" stroke="#fff" strokeWidth="2" /></Svg></TrayItem>
      <DesktopEdge />
    </Tray>
  </Taskbar>
);

export default function App() {
  return (
    <Screen>
      <Global />
      <Browser />
      <Content />
      <HScroll>
        <HButton $w={34} $pad={13}><Svg w={8} h={12} vb="0 0 8 12"><path d="M7 1 2 6 7 11" stroke="#555" strokeWidth="2.500" /></Svg></HButton>
        <HThumb />
        <HButton $w={50} $pad={8}><Svg w={8} h={12} vb="0 0 8 12"><path d="M1 1 6 6 1 11" stroke="#555" strokeWidth="2.500" /></Svg></HButton>
      </HScroll>
      <Dock />
    </Screen>
  );
}
